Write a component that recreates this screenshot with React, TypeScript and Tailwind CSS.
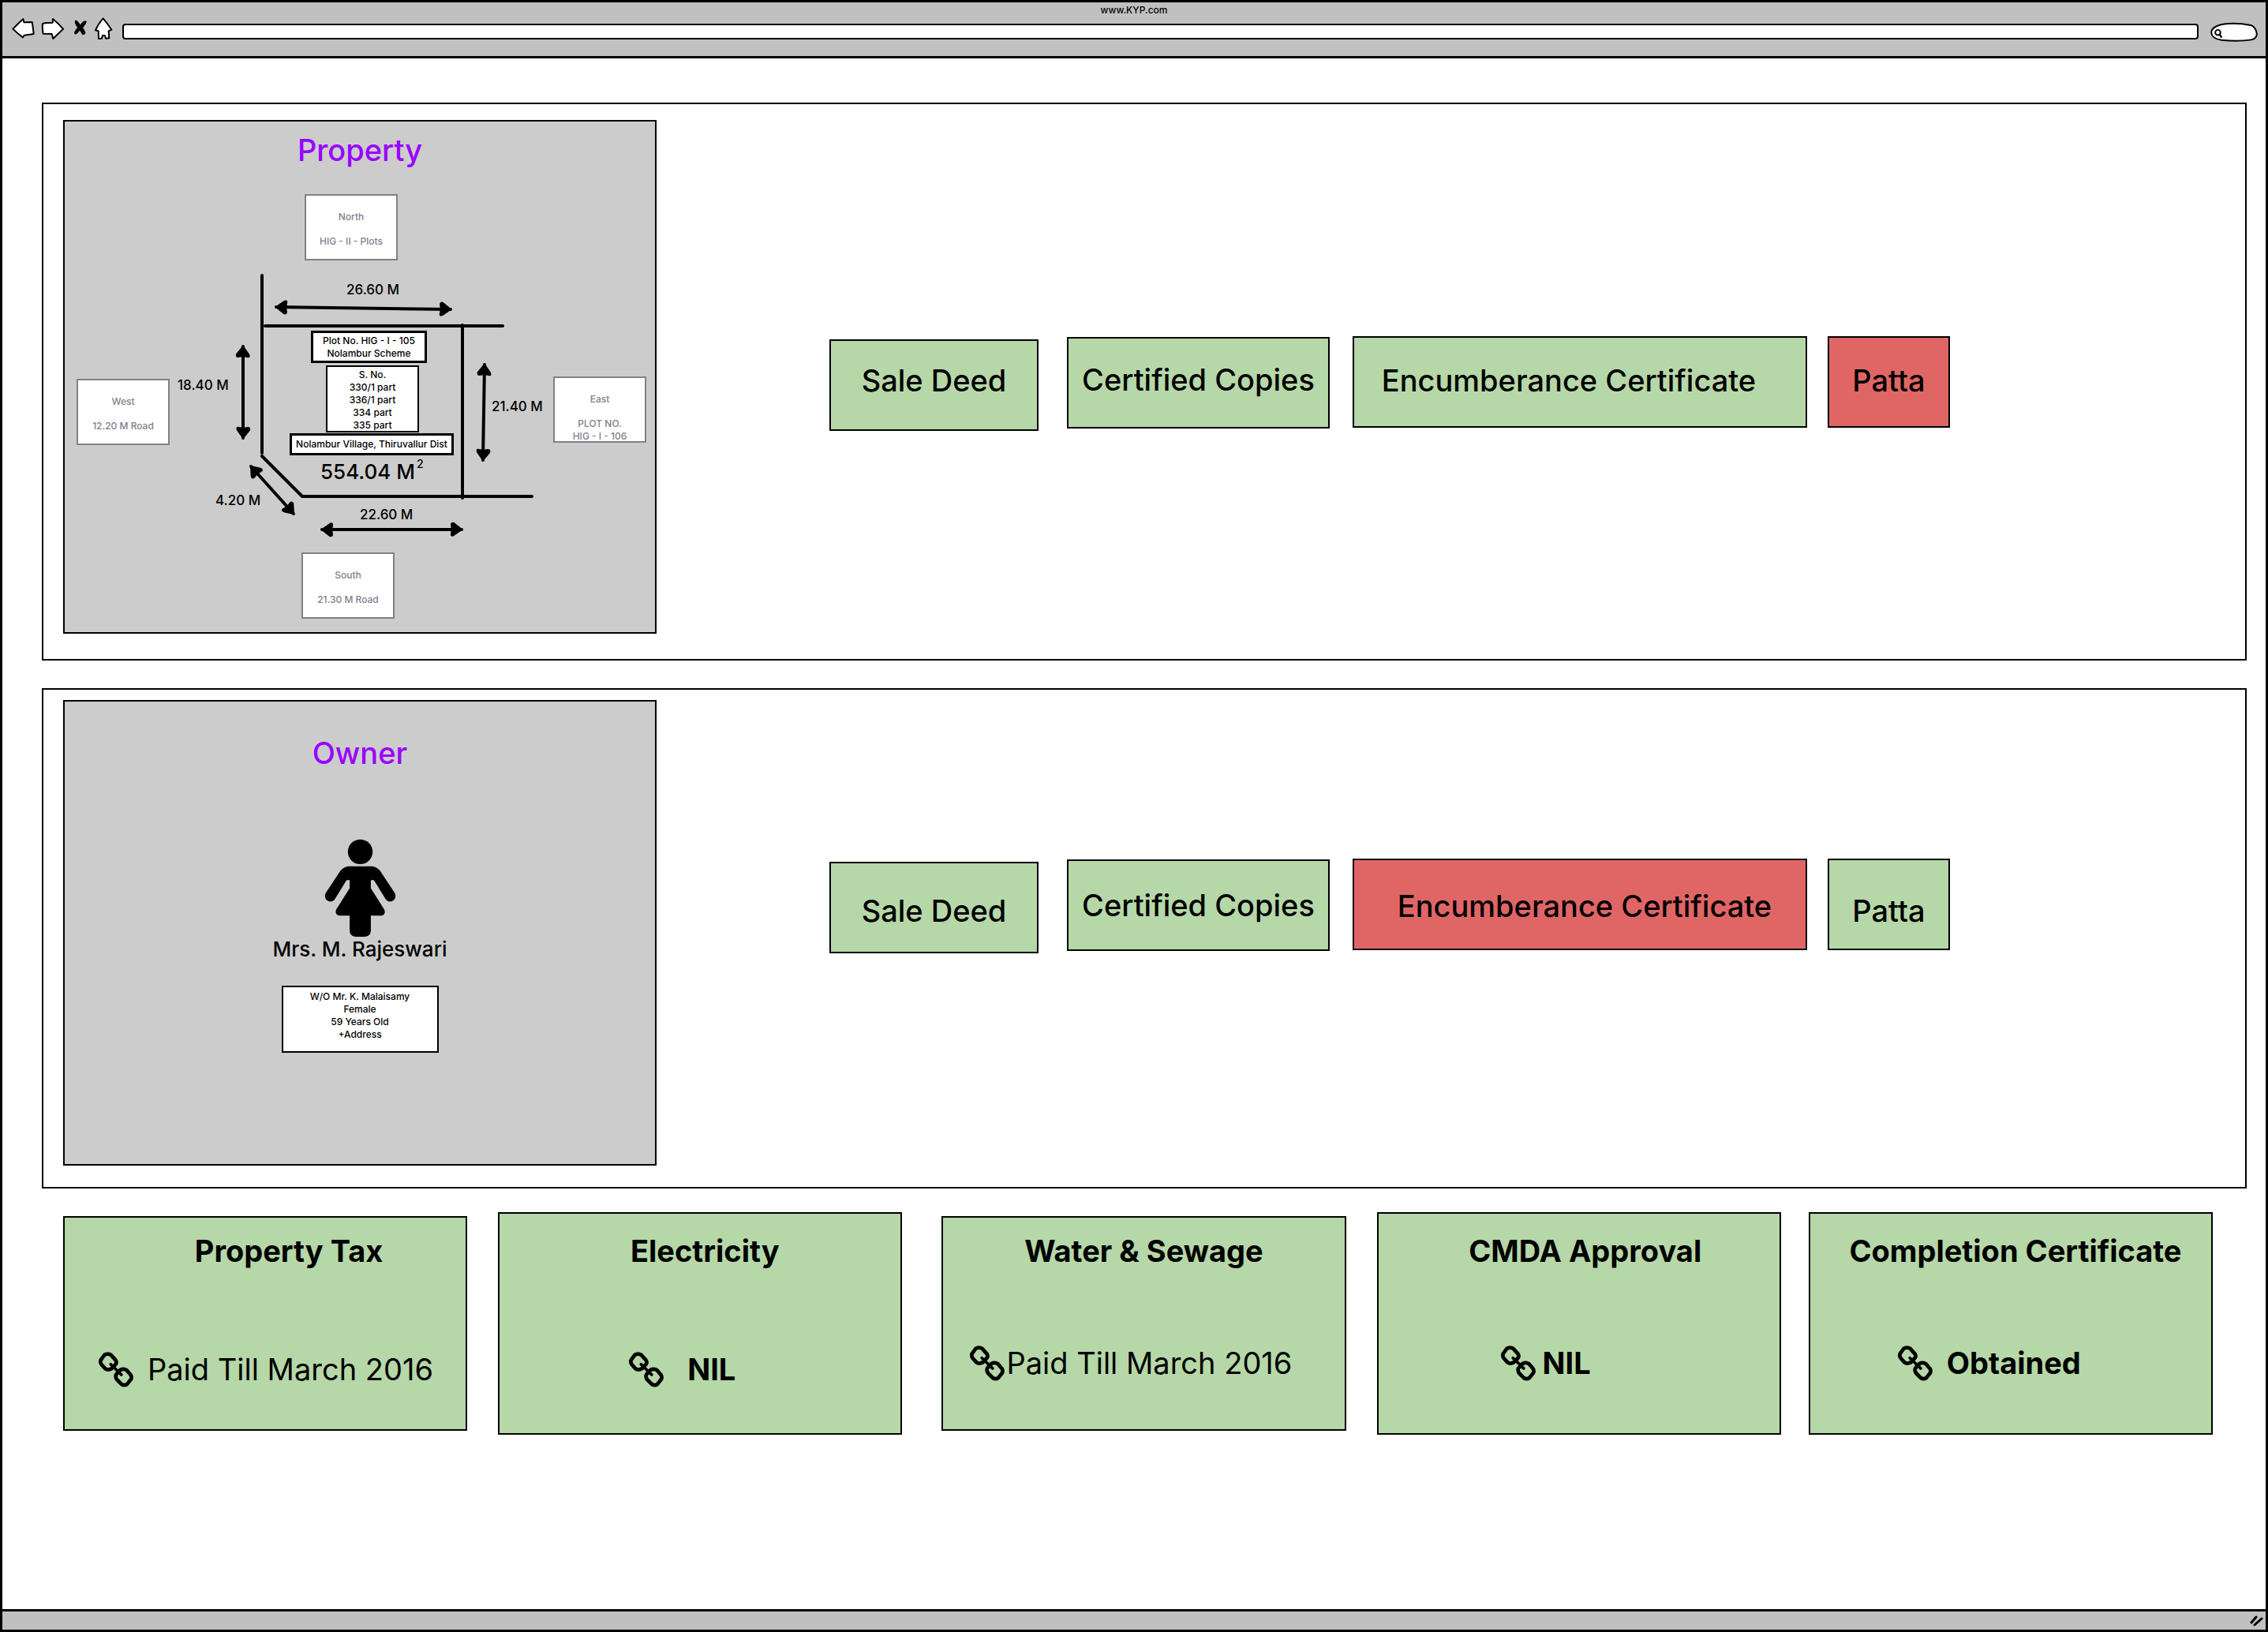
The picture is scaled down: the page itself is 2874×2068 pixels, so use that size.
import React from 'react';

/* ---------- Icons ---------- */

function BackIcon() {
  return (
    <svg viewBox="46 68 87 84" className="h-7 w-[29px]" fill="#fff" stroke="#000" strokeWidth="6" strokeLinejoin="round" aria-hidden="true">
      <path d="M50 112 L73 89 L89 74 L92 87 L123 86 Q127 108 129 131 L93 136 L88 144 Q68 130 50 112Z" />
    </svg>
  );
}

function ForwardIcon() {
  return (
    <svg viewBox="157 68 87 84" className="h-7 w-[29px]" fill="#fff" stroke="#000" strokeWidth="6" strokeLinejoin="round" aria-hidden="true">
      <path d="M163 92 Q170 88 201 88 L202 74 Q224 92 241 112 L203 149 L198 131 L165 130 Q161 110 163 92Z" />
    </svg>
  );
}

function StopIcon() {
  return (
    <svg viewBox="279 68 54 84" className="h-7 w-[18px]" fill="#000" stroke="#000" strokeWidth="3" strokeLinejoin="round" aria-hidden="true">
      <path d="M287 80 Q295 80 305 99 Q316 80 328 83 Q328 92 314 107 Q321 118 324 127 Q321 135 314 133 Q309 124 303 116 Q294 130 286 132 Q281 127 286 120 Q291 112 296 107 Q282 88 287 80Z" />
    </svg>
  );
}

function HomeIcon() {
  return (
    <svg viewBox="354 68 72 84" className="h-7 w-6" fill="#fff" stroke="#000" strokeWidth="6" strokeLinejoin="round" aria-hidden="true">
      <path d="M389 72 Q405 90 421 115 L410 120 L412 147 L399 148 L396 137 L387 137 L384 148 L372 149 L371 120 L360 117 Q372 90 389 72Z" />
    </svg>
  );
}

function ChainIcon() {
  return (
    <svg viewBox="28 30 130 132" className="h-[45px] w-11 shrink-0" fill="none" stroke="#000" strokeWidth="14" strokeLinejoin="round" strokeLinecap="round" aria-hidden="true">
      <path d="M36 60 L50 41 Q62 34 74 41 L92 61 Q97 69 92 76 L76 93 Q62 100 52 92 L38 76 Q33 68 36 60Z" />
      <path d="M93 115 L109 97 Q122 91 133 98 L148 116 Q153 124 149 132 L134 151 Q124 157 114 151 L96 133 Q90 124 93 115Z" />
      <path d="M73 76 L113 115" strokeWidth="11" />
    </svg>
  );
}

function WomanIcon() {
  return (
    <svg viewBox="240 608 280 382" className="h-[125px] w-[93px]" aria-hidden="true">
      <circle cx="380" cy="658" r="48" />
      <path d="M338 714 H422 Q442 714 457 732 L514 818 Q521 833 510 845 Q495 857 480 844 L433 768 H421 V799 L474 883 Q479 903 462 905 H421 V965 Q419 985 398 987 H362 Q341 985 339 965 V905 H300 Q281 903 286 883 L339 799 V768 H327 L280 844 Q265 857 250 845 Q239 833 246 818 L303 732 Q318 714 338 714Z" />
    </svg>
  );
}

/* ---------- Browser chrome ---------- */

function BrowserBar() {
  return (
    <header className="border-b-3 border-black bg-[#c0c0c0] pt-0.5 pb-3">
      <p className="text-center text-xs leading-4">www.KYP.com</p>
      <div className="flex h-[38px] items-center pr-2.5 pl-3">
        <nav className="mb-2 flex items-center" aria-label="Browser">
          <button type="button" aria-label="Back" className="mr-2"><BackIcon /></button>
          <button type="button" aria-label="Forward" className="mr-3"><ForwardIcon /></button>
          <button type="button" aria-label="Stop" className="mr-2"><StopIcon /></button>
          <button type="button" aria-label="Home" className="mr-3"><HomeIcon /></button>
        </nav>
        <input type="text" aria-label="Address" className="h-5 flex-1 rounded-sm border-2 border-black bg-white px-2 text-xs outline-none" />
        <div className="relative ml-[15px] h-[25px] w-[60px]">
          <svg viewBox="903 84 181 76" className="absolute inset-0 h-full w-full" fill="#fff" stroke="#000" strokeWidth="6" strokeLinecap="round" aria-hidden="true">
            <path d="M906 125 Q906 103 945 93 Q1000 85 1058 96 Q1078 104 1081 128 Q1082 148 1060 152 Q1010 160 945 153 Q908 148 906 125Z" />
            <circle cx="931" cy="124" r="10" />
            <path d="M938 132 L944 141" strokeWidth="7" />
          </svg>
          <input type="search" aria-label="Search" className="relative h-full w-full bg-transparent pr-2 pl-5 text-xs outline-none" />
        </div>
      </div>
    </header>
  );
}

/* ---------- Property plan ---------- */

function Arrow({ x1, y1, x2, y2 }: { x1: number; y1: number; x2: number; y2: number }) {
  const angle = (Math.atan2(y2 - y1, x2 - x1) * 180) / Math.PI;
  const head = 'M0 0 L10 -7 Q14 -9 13 -5 L12 0 L13 6 Q13 9 10 8Z';
  return (
    <g>
      <path d={`M${x1} ${y1} L${x2} ${y2}`} strokeWidth="4" />
      <path d={head} strokeWidth="2" fill="#000" transform={`translate(${x1} ${y1}) rotate(${angle})`} />
      <path d={head} strokeWidth="2" fill="#000" transform={`translate(${x2} ${y2}) rotate(${angle + 180})`} />
    </g>
  );
}

const neighbours = [
  { side: 'North', lines: ['HIG - II - Plots'], place: 'left-[304px] top-[92px]' },
  { side: 'West', lines: ['12.20 M Road'], place: 'left-[15px] top-[326px]' },
  { side: 'East', lines: ['PLOT NO.', 'HIG - I - 106'], place: 'left-[619px] top-[323px]' },
  { side: 'South', lines: ['21.30 M Road'], place: 'left-[300px] top-[546px]' },
];

const measures = [
  { text: '26.60 M', place: 'left-[357px] top-[203px]' },
  { text: '18.40 M', place: 'left-[143px] top-[324px]' },
  { text: '21.40 M', place: 'left-[541px] top-[351px]' },
  { text: '4.20 M', place: 'left-[191px] top-[470px]' },
  { text: '22.60 M', place: 'left-[374px] top-[488px]' },
];

function PropertyPlan() {
  return (
    <div className="relative h-[651px] w-[752px] shrink-0 border-2 border-black bg-[#ccc] pt-3.5">
      <h2 className="text-center text-[38px] leading-11 text-[#9900ff]">Property</h2>
      <svg viewBox="82 154 748 647" className="absolute inset-0 h-full w-full" fill="none" stroke="#000" strokeWidth="4" strokeLinecap="round" aria-hidden="true">
        <path d="M332 349 V574 M332 578 L383 629 M586 412 V631" />
        <path d="M336 413 H637 M383 629 H674" />
        <Arrow x1={350} y1={389} x2={571} y2={392} />
        <Arrow x1={308} y1={439} x2={308} y2={555} />
        <Arrow x1={614} y1={462} x2={612} y2={583} />
        <Arrow x1={318} y1={591} x2={372} y2={651} />
        <Arrow x1={408} y1={671} x2={585} y2={671} />
      </svg>
      {neighbours.map((n) => (
        <div key={n.side} className={`absolute h-[84px] w-[118px] border-2 border-[#80808c] bg-white pt-[19px] text-center text-xs leading-4 text-[#80808c] ${n.place}`}>
          <p className="mb-[15px]">{n.side}</p>
          {n.lines.map((l) => (
            <p key={l}>{l}</p>
          ))}
        </div>
      ))}
      {measures.map((m) => (
        <p key={m.text} className={`absolute text-[17px] leading-5 whitespace-nowrap ${m.place}`}>{m.text}</p>
      ))}
      <div className="absolute top-[265px] left-[312px] flex h-[41px] w-[147px] flex-col justify-center border-3 border-black bg-white text-center text-xs leading-4 whitespace-nowrap">
        <p>Plot No. HIG - I - 105</p>
        <p>Nolambur Scheme</p>
      </div>
      <div className="absolute top-[309px] left-[331px] h-[85px] w-[118px] border-2 border-black bg-white pt-0.5 text-center text-xs leading-4">
        <p>S. No.</p>
        <p>330/1 part</p>
        <p>336/1 part</p>
        <p>334 part</p>
        <p>335 part</p>
      </div>
      <div className="absolute top-[395px] left-[285px] flex h-7 w-[208px] items-center justify-center border-3 border-black bg-white text-xs leading-4 whitespace-nowrap">
        Nolambur Village, Thiruvallur Dist
      </div>
      <p className="absolute top-[430px] left-[324px] flex items-start gap-0.5 text-[26px] leading-7 whitespace-nowrap">
        554.04 M<span className="text-sm leading-2">2</span>
      </p>
    </div>
  );
}

/* ---------- Owner ---------- */

function OwnerCard() {
  return (
    <div className="flex h-[590px] w-[752px] shrink-0 flex-col items-center border-2 border-black bg-[#ccc] pt-[43px]">
      <h2 className="text-[38px] leading-11 text-[#9900ff]">Owner</h2>
      <div className="mt-[87px]"><WomanIcon /></div>
      <p className="mt-px text-[26px] leading-7">Mrs. M. Rajeswari</p>
      <div className="mt-8 h-[85px] w-[199px] border-2 border-black bg-white pt-1 text-center text-xs leading-4">
        <p>W/O Mr. K. Malaisamy</p>
        <p>Female</p>
        <p>59 Years Old</p>
        <p>+Address</p>
      </div>
    </div>
  );
}

/* ---------- Documents ---------- */

type Doc = { name: string; tone: string; box: string };

const green = 'bg-[#b6d7a8]';
const red = 'bg-[#e06666]';

const propertyDocs: Doc[] = [
  { name: 'Sale Deed', tone: green, box: 'mt-1 w-[265px] pb-3' },
  { name: 'Certified Copies', tone: green, box: 'ml-9 mt-px w-[333px] pb-2' },
  { name: 'Encumberance Certificate', tone: green, box: 'ml-[29px] w-[576px] pr-7 pb-1' },
  { name: 'Patta', tone: red, box: 'ml-[26px] w-[155px] pb-1' },
];

const ownerDocs: Doc[] = [
  { name: 'Sale Deed', tone: green, box: 'mt-1 w-[265px] pt-2' },
  { name: 'Certified Copies', tone: green, box: 'ml-9 mt-px w-[333px]' },
  { name: 'Encumberance Certificate', tone: red, box: 'ml-[29px] w-[576px] pl-3 pt-1' },
  { name: 'Patta', tone: green, box: 'ml-[26px] w-[155px] pt-4' },
];

function DocRow({ docs, className }: { docs: Doc[]; className: string }) {
  return (
    <div className={`ml-[219px] flex items-start ${className}`}>
      {docs.map((d) => (
        <button key={d.name} type="button" className={`flex h-[116px] items-center justify-center border-2 border-black text-[38px] leading-11 whitespace-nowrap ${d.tone} ${d.box}`}>
          {d.name}
        </button>
      ))}
    </div>
  );
}

/* ---------- Status cards ---------- */

const statuses = [
  { title: 'Property Tax', value: 'Paid Till March 2016', card: 'mt-[5px] h-[272px] pt-5', head: 'pl-[60px]', row: 'mt-[106px] ml-[43px] gap-[18px]' },
  { title: 'Electricity', value: 'NIL', bold: true, card: 'ml-[39px] h-[282px] pt-[25px]', head: 'pl-3', row: 'mt-[106px] ml-[164px] gap-[30px]' },
  { title: 'Water & Sewage', value: 'Paid Till March 2016', card: 'ml-[50px] mt-[5px] h-[272px] pt-5', head: '', row: 'mt-[98px] ml-[34px] gap-0.5' },
  { title: 'CMDA Approval', value: 'NIL', bold: true, card: 'ml-[39px] h-[282px] pt-[25px]', head: 'pl-4', row: 'mt-[98px] ml-[155px] gap-[9px]' },
  { title: 'Completion Certificate', value: 'Obtained', bold: true, card: 'ml-[35px] h-[282px] pt-[25px]', head: 'pl-3', row: 'mt-[98px] ml-[111px] gap-[18px]' },
];

export default function App() {
  return (
    <div className="flex min-h-screen flex-col border-3 border-black bg-white text-black font-medium font-['Inter',sans-serif]">
      <BrowserBar />
      <main className="flex-1 pt-14 pr-6 pb-10 pl-[50px]">
        <section className="flex items-start border-2 border-black pt-5 pb-8 pl-[25px]">
          <PropertyPlan />
          <DocRow docs={propertyDocs} className="mt-[274px]" />
        </section>
        <section className="mt-[35px] flex items-start border-2 border-black pt-[13px] pb-[27px] pl-[25px]">
          <OwnerCard />
          <DocRow docs={ownerDocs} className="mt-[201px]" />
        </section>
        <div className="mt-[30px] flex items-start pr-[43px] pl-[27px]">
          {statuses.map((s) => (
            <article key={s.title} className={`flex-1 border-2 border-black bg-[#b6d7a8] text-[38px] leading-11 whitespace-nowrap ${s.card}`}>
              <h3 className={`text-center font-bold ${s.head}`}>{s.title}</h3>
              <a href="#" className={`flex h-11 items-center ${s.row}`}>
                <ChainIcon />
                <span className={s.bold ? 'font-bold' : 'font-normal'}>{s.value}</span>
              </a>
            </article>
          ))}
        </div>
      </main>
      <footer className="flex h-[26px] items-center justify-end border-t-3 border-black bg-[#c0c0c0] pr-0.5">
        <svg viewBox="0 0 18 14" className="h-3.5 w-[18px]" stroke="#000" strokeWidth="3" strokeLinecap="round" aria-hidden="true">
          <path d="M2 9 L8 2 M6 12 L15 4" />
        </svg>
      </footer>
    </div>
  );
}
